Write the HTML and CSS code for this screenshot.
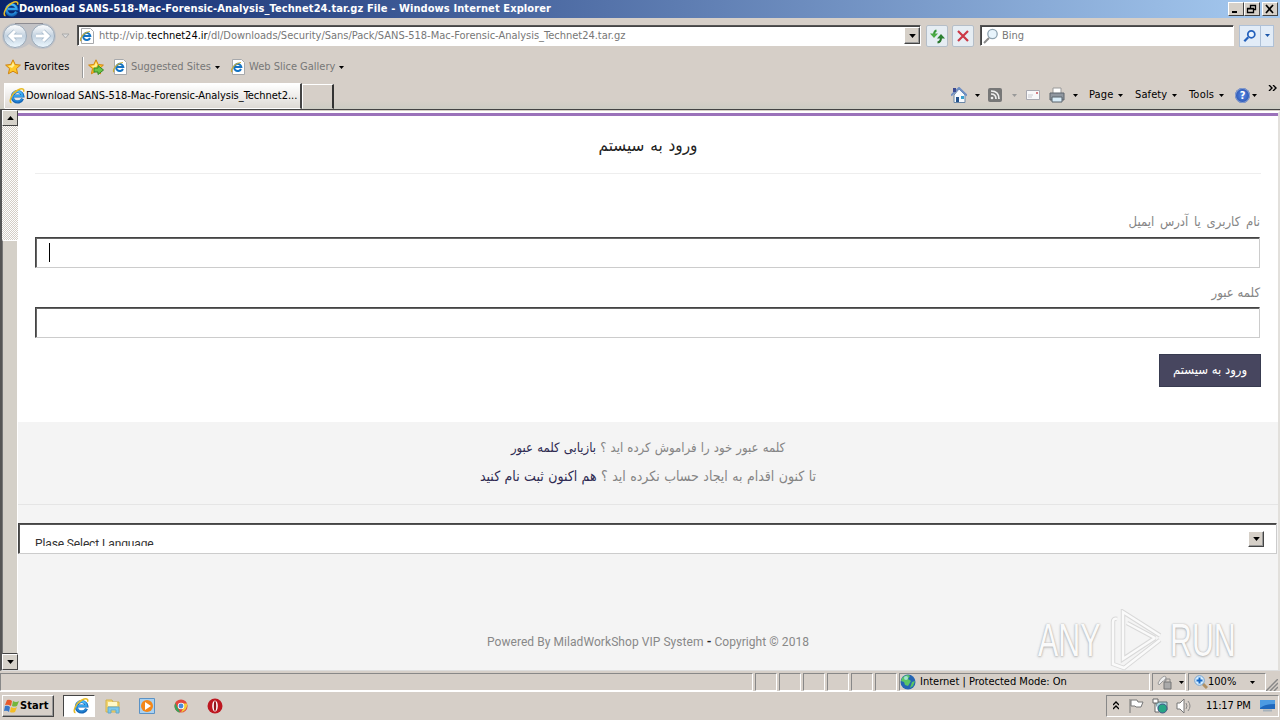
FILE: index.html
```html
<!DOCTYPE html>
<html lang="en">
<head>
    <meta charset="UTF-8">
    <title>Download SANS-518-Mac-Forensic-Analysis_Technet24.tar.gz File</title>
    <link rel="stylesheet" href="styles.css">
</head>
<body>
    <!-- Shared icons -->
    <svg class="defs">
        <defs>
            <linearGradient id="ball" x1="0" y1="0" x2="0" y2="1"><stop offset="0" stop-color="#fff"/><stop offset=".5" stop-color="#c3d2e0"/><stop offset="1" stop-color="#edf8ff"/></linearGradient>
            <linearGradient id="blue" x1="0" y1="0" x2="0" y2="1"><stop offset="0" stop-color="#48bfff"/><stop offset="1" stop-color="#1f7fd0"/></linearGradient>
        </defs>
        <symbol id="ie" viewBox="0 0 16 16">
            <path d="M13.6 10.7A5.3 5.3 0 1 1 13.9 8H5" fill="none" stroke="#1565b5" stroke-width="3"/>
            <path d="M13 10.7A5 5 0 1 1 13.5 8H5" fill="none" stroke="url(#blue)" stroke-width="1.9"/>
            <path d="M2.5 14.8C-1 14 3 5 9 2c4-2 6.600-1.500 5.500 1.800" fill="none" stroke="#e7bc28" stroke-width="1.500"/>
        </symbol>
        <symbol id="iepage" viewBox="0 0 16 16">
            <path d="M2.500.5h9l3 3v12h-12z" fill="#fff" stroke="#a7a9ac"/>
            <path d="M11 10a3.600 3.600 0 1 1 .3-2H5" fill="none" stroke="#1473c3" stroke-width="2"/>
            <path d="M2 13C0 11 5 4 11 3.500" fill="none" stroke="#c9ad35" stroke-width="1.200"/>
        </symbol>
        <symbol id="star" viewBox="0 0 16 16">
            <path d="M8 .8l2.200 4.700 5.200.6-3.900 3.500 1.100 5.200L8 12.200l-4.600 2.600 1.100-5.200L.6 6.100l5.200-.6z" fill="#ffc928" stroke="#d08310"/>
            <path d="M8 3l1.500 3.500L7 9 3 7l3.500-.5z" fill="#fff099"/>
        </symbol>
        <symbol id="down" viewBox="0 0 5 3"><path d="M0 0h5L2.500 3z" fill="currentColor"/></symbol>
    </svg>

    <header class="titlebar">
        <svg class="i16"><use href="#ie"/></svg>
        <h1>Download SANS-518-Mac-Forensic-Analysis_Technet24.tar.gz File - Windows Internet Explorer</h1>
        <div class="winbtns">
            <span><svg viewBox="0 0 12 10"><path d="M2 8h5" stroke="#000" stroke-width="2"/></svg></span>
            <span><svg viewBox="0 0 12 10"><path d="M4.500 4V1.500h5v4H8M4 1.500h6M1.500 4.500h6v4h-6zM1 4.800h7" fill="none" stroke="#000" stroke-width="1.300"/></svg></span>
            <span class="close"><svg viewBox="0 0 12 10"><path d="M2 1l7 8M9 1L2 9" stroke="#000" stroke-width="1.700"/></svg></span>
        </div>
    </header>

    <div class="navbar">
        <svg class="travel" viewBox="0 0 56 28">
            <path d="M13 1h28a13 13 0 0 1 0 26q-8 0-14-5-6 5-14 5A13 13 0 0 1 13 1z" fill="#c3c3c6"/>
            <path d="M13 1.500h28" stroke="#8d8c92"/>
            <circle cx="13" cy="14" r="11.500" fill="url(#ball)" stroke="#9aa9b8"/>
            <circle cx="41" cy="14" r="11.500" fill="url(#ball)" stroke="#9aa9b8"/>
            <path d="M20 14H8m5-5l-5 5 5 5M34 14h12m-5-5l5 5-5 5" fill="none" stroke="#a3b7c9" stroke-width="4.500"/>
            <path d="M20 14H8m5-5l-5 5 5 5M34 14h12m-5-5l5 5-5 5" fill="none" stroke="#fff" stroke-width="3"/>
        </svg>
        <svg class="history" viewBox="0 0 9 6"><path d="M1 1h7L4.500 5z" fill="#ddd" stroke="#aaa"/></svg>
        <div class="address sunken">
            <svg class="i16"><use href="#iepage"/></svg>
            <span class="url">http://vip.<b>technet24.ir</b>/dl/Downloads/Security/Sans/Pack/SANS-518-Mac-Forensic-Analysis_Technet24.tar.gz</span>
            <span class="dropbtn"><svg class="arrow7"><use href="#down"/></svg></span>
        </div>
        <span class="toolbtn refresh"><svg viewBox="0 0 16 16"><path d="M7.500 2.500Q5 3 5 7" fill="none" stroke="#38973a" stroke-width="2"/><path d="M1 5.500h8L5 10z" fill="#4cab45"/><path d="M8.500 14.500q3.500-.5 3.500-5" fill="none" stroke="#28762c" stroke-width="2"/><path d="M8 10.500h8L12 6z" fill="#2c8131"/></svg></span>
        <span class="toolbtn stop"><svg viewBox="0 0 16 16"><path d="M3 3l10 10M13 3L3 13" stroke="#cc3846" stroke-width="2.200"/></svg></span>
        <div class="search sunken">
            <svg class="i16" viewBox="0 0 16 16"><circle cx="9.500" cy="6" r="4.700" fill="#e8f4fc" stroke="#8fa3b1" stroke-width="1.300"/><path d="M6 10l-5 5" stroke="#8b8b8b" stroke-width="2"/></svg>
            <span>Bing</span>
        </div>
        <div class="searchbtn">
            <span><svg class="i14" viewBox="0 0 16 16"><circle cx="9.500" cy="6" r="4" fill="#e9f4ff" stroke="#2360bb" stroke-width="2"/><path d="M6 9.500L1.500 14" stroke="#2360bb" stroke-width="2.600"/></svg></span>
            <span><svg class="arrow5"><use href="#down"/></svg></span>
        </div>
    </div>

    <div class="favbar">
        <svg class="i16"><use href="#star"/></svg>
        <span class="favorites">Favorites</span>
        <i class="sep"></i>
        <svg class="i16" viewBox="0 0 16 16"><use href="#star"/><path d="M6 9h4V6.500l5.500 4.500-5.500 4.500V13H6z" fill="#69c448" stroke="#348923"/></svg>
        <a class="fav suggested"><svg class="i16"><use href="#iepage"/></svg><span>Suggested Sites</span><svg class="arrow5"><use href="#down"/></svg></a>
        <a class="fav slices"><svg class="i16"><use href="#iepage"/></svg><span>Web Slice Gallery</span><svg class="arrow5"><use href="#down"/></svg></a>
    </div>

    <div class="tabbar">
        <div class="tab"><svg class="i16"><use href="#ie"/></svg><span>Download SANS-518-Mac-Forensic-Analysis_Technet2...</span></div>
        <div class="newtab"></div>
        <nav class="commands">
            <svg class="i16 home" viewBox="0 0 16 16"><path d="M3 8v7.500h11V8L8 2z" fill="#f7fafd" stroke="#6b87a6"/><path d="M0 8.500L8 1l8 7.500" fill="none" stroke="#6f8fc4" stroke-width="2"/><path d="M2 1h3v4H2z" fill="#3c4b91"/><path d="M5 10h3v5H5z" fill="#23538d"/><path d="M10 9h3v3h-3z" fill="#39a0ce"/></svg>
            <svg class="arrow5 a1"><use href="#down"/></svg>
            <svg class="i14 feed" viewBox="0 0 14 14"><rect width="14" height="14" rx="2" fill="#777"/><path d="M3 6q5 0 5 5M3 3q8 0 8 8" fill="none" stroke="#eee" stroke-width="1.700"/><circle cx="4" cy="10" r="1.300" fill="#eee"/></svg>
            <svg class="arrow5 a2"><use href="#down"/></svg>
            <svg class="mail" viewBox="0 0 14 10"><path d="M.5.5h13v9H.5z" fill="#f8f8fa" stroke="#a9a9b1"/><path d="M2 5h5M2 7h4" stroke="#c8c8cf"/><path d="M10 2h2v2h-2z" fill="#d57f85"/></svg>
            <svg class="i16 printer" viewBox="0 0 16 16"><path d="M4 1h8v6H4z" fill="#fff" stroke="#999"/><path d="M1 6h14v7H1z" fill="#9097a0" stroke="#5d656c"/><path d="M3 10h10v5H3z" fill="#d9edf9" stroke="#58636a"/></svg>
            <svg class="arrow5 a3"><use href="#down"/></svg>
            <span class="page-menu">Page</span><svg class="arrow5"><use href="#down"/></svg>
            <span class="safety-menu">Safety</span><svg class="arrow5"><use href="#down"/></svg>
            <span class="tools-menu">Tools</span><svg class="arrow5"><use href="#down"/></svg>
            <span class="help">?</span><svg class="arrow5 a4"><use href="#down"/></svg>
            <svg class="more" viewBox="0 0 9 6"><path d="M1 0l3 3-3 3M5 0l3 3-3 3" fill="none" stroke="#000" stroke-width="1.400"/></svg>
        </nav>
    </div>

    <div class="viewport">
        <div class="scrollbar">
            <span class="scrollbtn"><svg class="arrow7 up"><use href="#down"/></svg></span>
            <div class="thumb"></div>
            <span class="scrollbtn"><svg class="arrow7"><use href="#down"/></svg></span>
        </div>
        <main dir="rtl" lang="fa">
            <section class="login">
                <h2>ورود به سیستم</h2>
                <form>
                    <label class="user">نام کاربری یا آدرس ایمیل</label>
                    <div class="field"><i class="caret"></i></div>
                    <label>کلمه عبور</label>
                    <div class="field"></div>
                    <button type="button">ورود به سیستم</button>
                </form>
            </section>
            <section class="links">
                <p class="forgot">کلمه عبور خود را فراموش کرده اید ؟ <a>بازیابی کلمه عبور</a></p>
                <p class="register">تا کنون اقدام به ایجاد حساب نکرده اید ؟ <a>هم اکنون ثبت نام کنید</a></p>
            </section>
            <div class="language" dir="ltr"><span>Plase Select Language</span><i class="dropbtn"><svg class="arrow7"><use href="#down"/></svg></i></div>
            <p class="powered" dir="ltr">Powered By MiladWorkShop VIP System <b>-</b> Copyright © 2018</p>
            <div class="watermark" dir="ltr">
                <span>ANY</span>
                <svg viewBox="0 0 54 62">
                    <path d="M13 33V3l37 23.500M7 10q-4-1-4 3v42l11 4 36-28M17 14l28 15M13 33v17l32-21" fill="none" stroke="#d9d9d9" stroke-width="4.500"/>
                    <path d="M13 33V3l37 23.500M7 10q-4-1-4 3v42l11 4 36-28M17 14l28 15M13 33v17l32-21" fill="none" stroke="#fafafa" stroke-width="2.500"/>
                </svg>
                <span>RUN</span>
            </div>
        </main>
    </div>

    <div class="statusbar">
        <div class="cell message"></div>
        <div class="cell"></div><div class="cell"></div><div class="cell"></div><div class="cell"></div><div class="cell"></div><div class="cell"></div>
        <div class="cell zone">
            <svg class="i16" viewBox="0 0 16 16"><circle cx="8" cy="8" r="7.500" fill="#2465b4"/><path d="M2 4q5-5 8-2l-2 3 3 2-3 5-3-1-1-3-3-1zM12 8l3-1-2 5-3 2z" fill="#5bc565"/><circle cx="6" cy="4" r="2" fill="#bdefff" opacity=".7"/></svg>
            <span>Internet | Protected Mode: On</span>
        </div>
        <div class="cell protect"><svg class="i16" viewBox="0 0 16 16"><path d="M1 9q5-9 8-6v4H6L2 11z" fill="#eee" stroke="#999"/><path d="M7 8h7v7H7z" fill="#aaa" stroke="#777"/><path d="M8 8V5h5v3" fill="none" stroke="#888"/></svg><svg class="arrow5"><use href="#down"/></svg></div>
        <div class="cell zoom"><svg class="i14" viewBox="0 0 14 14"><path d="M8 8l5 5" stroke="#b19164" stroke-width="3"/><circle cx="5.500" cy="5.500" r="4.800" fill="#d5edff" stroke="#75a3d0"/><path d="M2.500 5.500h6M5.500 2.500v6" stroke="#1768c5" stroke-width="2"/></svg><span>100%</span><svg class="arrow5"><use href="#down"/></svg></div>
        <svg class="grip" viewBox="0 0 12 12"><path d="M0 12L12 0M4 12l8-8M8 12l4-4" stroke="#888" stroke-width="1.500"/></svg>
    </div>

    <footer class="taskbar">
        <div class="start"><svg class="i16" viewBox="0 0 16 16"><path d="M3 2q3-1 5 1L7 8Q4 6 1 7z" fill="#e85a2b"/><path d="M9 3q3 2 6 0l-2 5q-3 1-5 0z" fill="#74b63d"/><path d="M1 8q3-1 5 1l-1 5q-2-2-5-1z" fill="#3977c8"/><path d="M7 9q3 2 6 0l-2 5q-3 1-5 0z" fill="#f4bd25"/></svg><span>Start</span></div>
        <div class="task active"><svg class="i16"><use href="#ie"/></svg></div>
        <svg class="i16 t1" viewBox="0 0 16 16"><path d="M1 2h6l1 2h6v10H1z" fill="#f4d66e" stroke="#d3b34c"/><path d="M3 4h9v4H3z" fill="#fff9c9"/><path d="M3 15V9h11v6h-3v-3H6v3z" fill="#79c9ed" stroke="#64a8cb"/></svg>
        <svg class="i16 t2" viewBox="0 0 16 16"><path d="M.5.5h15v15H.5z" fill="#a9d1f1" stroke="#5b92c5"/><circle cx="8" cy="8" r="6" fill="#f48718"/><path d="M6 4l6 4-6 4z" fill="#fff"/></svg>
        <svg class="i14 t3" viewBox="0 0 16 16"><circle cx="8" cy="8" r="7.500" fill="#e2483d"/><path d="M1.500 4.500L7 15.500A7.500 7.500 0 0 1 1.500 4.500z" fill="#37a45a"/><path d="M8 5h7q1 7-7 10.500l3-6z" fill="#f5cb39"/><circle cx="8" cy="8" r="3.700" fill="#fff"/><circle cx="8" cy="8" r="2.800" fill="#4a8adb"/></svg>
        <svg class="i16 t4" viewBox="0 0 16 16"><circle cx="8" cy="8" r="7.500" fill="#bd1720"/><ellipse cx="8" cy="8" rx="2.800" ry="5.500" fill="#fff"/><ellipse cx="8" cy="8" rx="1.200" ry="5" fill="#94151b"/></svg>
        <div class="tray">
            <svg class="chev" viewBox="0 0 6 9"><path d="M0 4l3-3 3 3M0 8l3-3 3 3" fill="none" stroke="#000" stroke-width="1.300"/></svg>
            <svg class="i16 flag" viewBox="0 0 16 16"><path d="M2 1v14M3 2h6l1 2h5l-2 5H8L7 8H3z" fill="#fff" stroke="#777"/></svg>
            <svg class="i16 net" viewBox="0 0 16 16"><path d="M4 4h11v8H4z" fill="#a9d6df" stroke="#586c73"/><path d="M1 1h5v4H1zM3 5v9h4" fill="#fff" stroke="#666"/><circle cx="10.500" cy="10.500" r="4.500" fill="#27a585" stroke="#458"/></svg>
            <svg class="i16 sound" viewBox="0 0 16 16"><path d="M1 5h3l4-4v14l-4-4H1z" fill="#fff" stroke="#777"/><path d="M10 5q2 3 0 6M12 3q4 5 0 10" fill="none" stroke="#888"/></svg>
            <span>11:17 PM</span>
            <svg class="desktop" viewBox="0 0 15 13"><path d="M0 1h15v9H0z" fill="#1f68bd"/><path d="M0 1h15v4Q5 5 0 9z" fill="#4d9be2"/><path d="M3 11.500h9" stroke="#a5b1bb" stroke-width="2"/></svg>
        </div>
    </footer>
</body>
</html>
```
FILE: styles.css
```css
* { box-sizing: border-box; }
body { width: 1280px; height: 720px; margin: 0; overflow: hidden; display: flex; flex-direction: column; background: #d6cfc8; color: #000; font: 11px/16px "DejaVu Sans Condensed", "DejaVu Sans", sans-serif; white-space: nowrap; }
svg { flex: none; display: block; }
.defs { position: absolute; width: 0; height: 0; }
.i16 { width: 16px; height: 16px; }
.i14 { width: 14px; height: 14px; }
.arrow5 { width: 5px; height: 3px; }
.arrow7 { width: 7px; height: 4px; }
.up { transform: rotate(180deg); }
.sunken { border: 1px solid; border-color: #555 #fff #fff #555; box-shadow: inset 1px 1px #444; background: #fff; }

/* Window caption */
.titlebar { height: 18px; flex: none; display: flex; align-items: center; padding: 0 2px 0 3px; background: linear-gradient(to right, #0b246a, #a6caf0); color: #fff; }
.titlebar h1 { margin: 0; flex: 1; font-size: 11px; font-weight: bold; letter-spacing: .1px; }
.winbtns { display: flex; }
.winbtns span { width: 16px; height: 14px; padding: 1px; background: #d6d0c8; border: 1px solid; border-color: #fff #444 #444 #fff; }
.winbtns svg { width: 12px; height: 10px; }
.winbtns .close { margin-left: 2px; }

/* Address and search */
.navbar { height: 35px; flex: none; display: flex; align-items: center; padding: 0 6px 0 2px; }
.travel { width: 56px; height: 28px; }
.history { width: 9px; height: 6px; margin: 0 9px 0 3px; }
.address { width: 844px; height: 21px; margin-left: -2px; display: flex; align-items: center; padding-left: 1px; color: #777; }
.url { margin-left: 4px; flex: 1; letter-spacing: -.01px; }
.url b { color: #000; font-weight: normal; }
.dropbtn { width: 16px; height: 17px; display: flex; align-items: center; justify-content: center; background: #d6d0c8; border: 1px solid; border-color: #fff #444 #444 #fff; box-shadow: inset -1px -1px #999; color: #000; }
.toolbtn { width: 22px; height: 22px; padding: 2px; border: 1px solid #b5bec8; background: #e6edf3; border-radius: 2px; }
.toolbtn svg { width: 16px; height: 16px; }
.refresh { margin-left: 5px; }
.stop { margin: 0 6px 0 4px; }
.search { width: 254px; height: 21px; padding-left: 2px; display: flex; align-items: center; gap: 3px; color: #777; }
.searchbtn { display: flex; margin-left: 5px; color: #1c57a9; }
.searchbtn span { height: 22px; width: 22px; border: 1px solid #afc1d7; background: #e2ecf7; display: flex; align-items: center; justify-content: center; }
.searchbtn span + span { width: 14px; margin-left: -1px; }

.favbar { height: 28px; flex: none; display: flex; align-items: center; padding-left: 5px; }
.favorites { width: 58px; margin-left: 3px; letter-spacing: .1px; }
.sep { width: 2px; height: 21px; border-left: 1px solid #999; border-right: 1px solid #fff; margin-right: 4px; }
.fav { display: flex; align-items: center; }
.fav span { margin: 0 4px 0 3px; color: #777; }
.suggested { margin-left: 8px; width: 110px; }
.slices { margin-left: 8px; }

.tabbar { height: 28px; flex: none; display: flex; padding-left: 4px; background: linear-gradient(#d6cfc8 70%, #ccccc3); }
.tab { width: 298px; margin-top: 2px; padding-left: 4px; display: flex; align-items: center; background: linear-gradient(#fff, #dedad5); border: 1px solid; border-color: #fff #444 transparent #fff; border-right-width: 2px; }
.tab span { margin-left: 1px; letter-spacing: -.03px; }
.newtab { width: 32px; margin-top: 3px; border: 1px solid; border-color: #fff #333 transparent #fff; border-right-width: 2px; }
.commands { display: flex; align-items: center; margin-left: 617px; position: relative; flex: 1; }
.a1 { margin: 0 8px; }
.a2 { margin: 0 9px 0 10px; color: #999; }
.mail { width: 14px; height: 10px; }
.printer { margin-left: 9px; }
.a3 { margin: 0 11px 0 8px; }
.page-menu { width: 29px; letter-spacing: .15px; }
.safety-menu { width: 37px; margin-left: 12px; letter-spacing: .1px; }
.tools-menu { width: 30px; margin-left: 12px; letter-spacing: .2px; }
.help { width: 15px; height: 15px; margin: 0 2px 0 11px; border-radius: 50%; background: radial-gradient(#598be6, #173f9e); box-shadow: inset 0 0 0 1px #8aa0cf; text-align: center; color: #fff; font-weight: bold; line-height: 15px; }
.more { position: absolute; right: 3px; top: 4px; width: 9px; height: 6px; }

/* Page area and left hand scrollbar */
.viewport { height: 562px; flex: none; display: flex; border-top: 1px solid #444; border-left: 2px solid #555; border-bottom: 1px solid #ddd; }
.scrollbar { width: 16px; display: flex; flex-direction: column; background: repeating-conic-gradient(#d4cdc5 0 25%, #fff 0 50%) 0 0/2px 2px; }
.scrollbtn { height: 16px; display: flex; align-items: center; justify-content: center; background: #d6d2ca; border: 1px solid; border-color: #fff #444 #444 #fff; }
.thumb { flex: 1; margin-top: 114px; background: #d4d0c8; border: 1px solid; border-color: #fff #fff #444 #777; }
main { position: relative; flex: 1; margin-top: 1px; background: #f4f4f4; border-top: 2px solid #fff; border-right: 2px solid #e2e0dc; color: #858585; }
.login { height: 309px; background: #fff; border-top: 3px solid #9b72ba; padding: 0 17px; }
.login h2 { height: 58px; margin: 0 0 34px; border-bottom: 1px solid #eee; text-align: center; font-size: 17px; line-height: 59px; font-weight: normal; word-spacing: 1px; color: #222; }
.login label { display: block; height: 29px; padding: 3px 1px; font-size: 13px; line-height: 21px; }
.login .user { word-spacing: 2px; }
.field { height: 31px; margin: 0 1px 11px 0; border: 1px solid; border-color: #444 #ccc #ccc #444; box-shadow: inset 1px 1px #666; padding: 5px 13px; background: #fff; direction: ltr; }
.caret { display: block; width: 1px; height: 19px; background: #000; }
.login .field + label { height: 28px; }
.login button { display: block; width: 102px; height: 33px; margin-top: 16px; padding: 0 0 3px; border: 1px solid #383b50; background: #47465f; color: #fff; font: 13px/27px "DejaVu Sans Condensed", sans-serif; }
.links { height: 83px; padding-top: 12px; border-bottom: 1px solid #e5e5e5; text-align: center; font-size: 13px; line-height: 28px; }
.links p { margin: 0; height: 28px; }
.links a { color: #2f2b52; }
.forgot { word-spacing: .4px; }
.register { font-size: 14px; word-spacing: .4px; }
.language { height: 31px; margin: 18px 1px 0 0; padding-left: 16px; border: 1px solid; border-color: #444 #ccc #ccc #444; box-shadow: inset 1px 1px #555; background: #fff; display: flex; justify-content: space-between; font-family: Roboto, sans-serif; color: #333; font-size: 12px; }
.language span { height: 11px; margin-top: 11px; line-height: 18px; overflow: hidden; letter-spacing: -.12px; }
.language .dropbtn { margin: 7px 12px 0 0; height: 16px; }
.powered { margin: 80px 0 0; text-align: center; font: 12px/16px Roboto, sans-serif; letter-spacing: .06px; color: #888; }
.powered b { color: #222; }
.watermark { position: absolute; left: 1020px; top: 496px; display: flex; align-items: center; gap: 6px; font: 46px/60px "Liberation Sans", sans-serif; color: #fafafa; text-shadow: 0 0 2px #aaa, 0 1px 3px #bbb; }
.watermark span { width: 66px; transform: scaleX(.66); transform-origin: left; }
.watermark svg { width: 54px; height: 62px; }

.statusbar { height: 21px; flex: none; display: flex; padding-top: 2px; gap: 2px; border-bottom: 1px solid #fff; }
.cell { width: 22px; height: 18px; border: 1px solid; border-color: #888 #fff #fff #888; display: flex; align-items: center; }
.message { width: 753px; }
.zone { width: 251px; gap: 4px; }
.protect { width: 34px; gap: 6px; padding-left: 4px; }
.zoom { width: 78px; padding-left: 5px; }
.zoom span { margin: 0 14px 0 0; }
.grip { width: 12px; height: 12px; margin: 6px 0 0 -2px; }

.taskbar { height: 27px; display: flex; align-items: center; padding: 0 1px 0 2px; }
.start { width: 52px; height: 22px; display: flex; align-items: center; border: 1px solid; border-color: #fff #444 #444 #fff; box-shadow: inset -1px -1px #999; padding-left: 1px; font-weight: bold; letter-spacing: .1px; }
.active { width: 32px; height: 22px; margin-left: 9px; padding-left: 9px; display: flex; align-items: center; background: #fff; border: 1px solid; border-color: #444 #fff #fff #444; }
.t1 { margin-left: 10px; }
.t2 { margin-left: 18px; }
.t3 { margin-left: 19px; }
.t4 { margin-left: 19px; }
.tray { width: 173px; height: 22px; margin-left: auto; display: flex; align-items: center; border: 1px solid; border-color: #888 #fff #fff #888; padding-left: 6px; }
.chev { width: 6px; height: 9px; }
.flag { margin-left: 9px; }
.net { margin-left: 8px; }
.sound { margin-left: 8px; }
.tray span { width: 45px; margin-left: 14px; letter-spacing: -.2px; }
.desktop { width: 15px; height: 13px; margin-left: 9px; }
```
